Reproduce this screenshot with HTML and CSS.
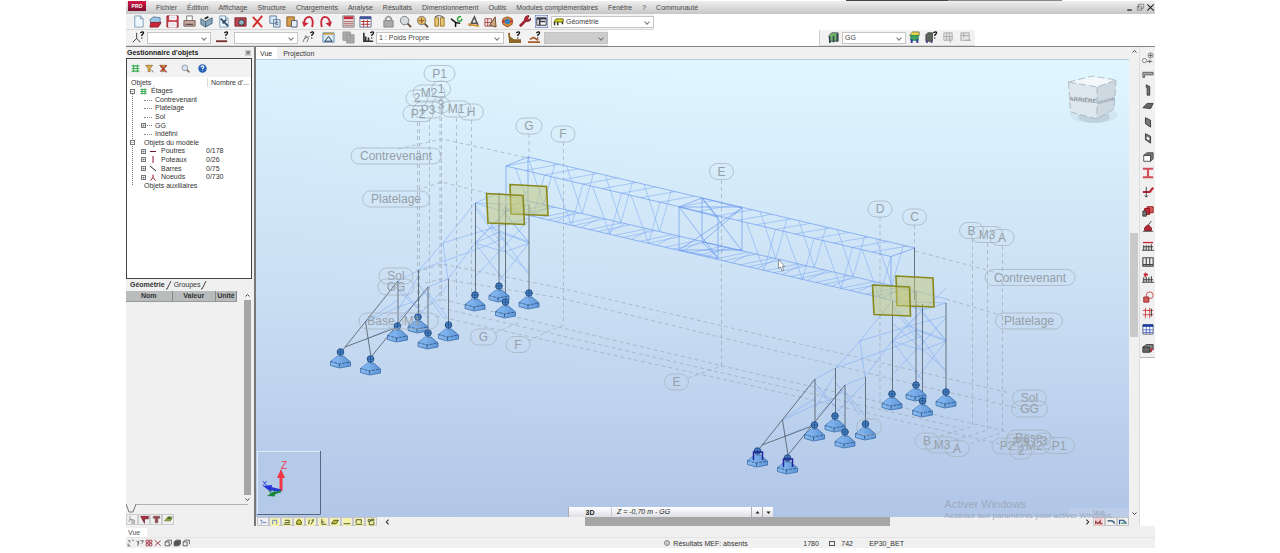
FILE: index.html
```html
<!DOCTYPE html>
<html lang="fr">
<head>
<meta charset="utf-8">
<title>EP30_BET - Vue</title>
<link rel="stylesheet" href="styles.css">
</head>
<body>
<div class="app">
  <header class="menubar">
    <span class="brand">PRO</span>
    <nav class="menus">
      <a href="#">Fichier</a><a href="#">Édition</a><a href="#">Affichage</a><a href="#">Structure</a><a href="#">Chargements</a><a href="#">Analyse</a><a href="#">Résultats</a><a href="#">Dimensionnement</a><a href="#">Outils</a><a href="#">Modules complémentaires</a><a href="#">Fenêtre</a><a href="#">?</a><a href="#">Communauté</a>
    </nav>
    <div class="window-buttons">
      <button data-icon="minimize" aria-label="Réduire"></button>
      <button data-icon="restore" aria-label="Restaurer"></button>
      <button data-icon="close" aria-label="Fermer"></button>
    </div>
  </header>

  <div class="toolbar-row">
    <div class="toolbar toolbar-main">
      <div class="tools" data-tools="new open save print preview capture photo delete copy paste undo redo"></div>
      <div class="tools" data-tools="calc table"></div>
      <div class="tools" data-tools="lock zoom zoomall rotate axes measure edit view3d wrench inspector"></div>
      <label class="combo combo-geometry"><svg class="combo-icon" viewBox="0 0 14 10"><path d="M1 5l3-4h9v4z" fill="#d7d321" stroke="#555718"/><path d="M2 5v4M6 5v4M12 5v3" stroke="#3c4020" stroke-width="2"/></svg><select aria-label="Disposition"><option>Géométrie</option></select></label>
    </div>
  </div>
  <div class="toolbar-row">
    <div class="toolbar toolbar-selection">
      <div class="tools" data-tools="nodeq"></div>
      <label class="combo combo-node"><select aria-label="Noeuds"><option></option></select></label>
      <div class="tools tools-wide" data-tools="barq"></div>
      <label class="combo combo-node"><select aria-label="Barres"><option></option></select></label>
      <div class="tools tools-spaced" data-tools="objq frame blocks loadq"></div>
      <label class="combo combo-case"><select aria-label="Cas de charge"><option>1 : Poids Propre</option></select></label>
      <div class="tools tools-spaced" data-tools="caseq modeq"></div>
      <label class="combo combo-off"><select aria-label="Mode" disabled><option></option></select></label>
    </div>
    <div class="toolbar toolbar-storey">
      <div class="tools" data-tools="storey"></div>
      <label class="combo combo-node"><select aria-label="Étage"><option>GG</option></select></label>
      <div class="tools" data-tools="storeys storeyq gridup griddown"></div>
    </div>
  </div>

  <div class="workspace">
    <aside class="side">
      <section class="objects">
        <h2>Gestionnaire d'objets <button class="dock-close" aria-label="Fermer le panneau">×</button></h2>
        <div class="objects-box">
          <div class="tools object-tools" data-tools="tree filter filteroff search help"></div>
          <div class="tree-head"><span>Objets</span><span>Nombre d'...</span></div>
          <ul class="tree">
            <li class="l1"><i class="box">−</i><svg viewBox="0 0 14 14"><path d="M1 3h12M1 7h12M1 11h12M4 1v12M10 1v12" stroke="#35a854" stroke-width="2"/></svg>Étages</li>
            <li class="l2">Contrevenant</li>
            <li class="l2">Platelage</li>
            <li class="l2">Sol</li>
            <li class="l2 plus"><i class="box">+</i>GG</li>
            <li class="l2">Indéfini</li>
            <li class="l1 plain"><i class="box">−</i>Objets du modèle</li>
            <li class="l3"><i class="box">+</i><svg viewBox="0 0 14 14"><path d="M1 7h12" stroke="#6b1b27" stroke-width="2"/></svg>Poutres<b>0/178</b></li>
            <li class="l3"><i class="box">+</i><svg viewBox="0 0 14 14"><path d="M7 0v14" stroke="#8f1c2e" stroke-width="2"/></svg>Poteaux<b>0/26</b></li>
            <li class="l3"><i class="box">+</i><svg viewBox="0 0 14 14"><path d="M1 2l12 10" stroke="#222" stroke-width="2"/></svg>Barres<b>0/75</b></li>
            <li class="l3"><i class="box">+</i><svg viewBox="0 0 14 14"><path d="M7 1v6l-5 6M7 7l5 6" fill="none" stroke="#8f1c2e" stroke-width="2"/></svg>Noeuds<b>0/730</b></li>
            <li class="l1 plain">Objets auxiliaires</li>
          </ul>
        </div>
        <div class="tabs">
          <button class="on">Géométrie</button><svg viewBox="0 0 6 10"><path d="M0 9h1L5 1" fill="none" stroke="#444"/></svg>
          <button>Groupes</button><svg viewBox="0 0 6 10"><path d="M0 9h1L5 1" fill="none" stroke="#444"/></svg>
        </div>
      </section>
      <section class="properties">
        <div class="prop-body">
          <table><thead><tr><th class="name">Nom</th><th>Valeur</th><th class="unit">Unité</th></tr></thead></table>
          <div class="vbar vbar-dark"><button data-icon="up" aria-label="Monter"></button><span class="thumb"></span><button data-icon="down" aria-label="Descendre"></button></div>
        </div>
        <div class="prop-tab"><svg viewBox="0 0 128 10" preserveAspectRatio="xMinYMin"><path d="M0 0l3 8h4l3-8h112" fill="none" stroke="#555" stroke-width=".8"/></svg></div>
        <div class="tools side-tools" data-tools="pnode pbar psect pload"></div>
      </section>
    </aside>

    <main class="view">
      <div class="view-main">
        <div class="view-tabs"><button class="on">Vue</button><button>Projection</button></div>
        <div class="canvas">
          <svg id="model" viewBox="256 60 873 457" role="img" aria-label="Vue 3D de la structure">
            <defs>
              <linearGradient id="steel" x2="1"><stop offset="0" stop-color="#8bbcf0"/><stop offset="1" stop-color="#5f97da"/></linearGradient>
              <symbol id="support" viewBox="0 0 22 22" overflow="visible">
                <path d="M7.500 10h6l7 6v4l-11 2-9-2.500v-4z" fill="url(#steel)" stroke="#2d609f" stroke-width=".7"/>
                <path d="M.5 15.500l9 2.500V10h-2z" fill="#7db2ef" opacity=".8"/>
                <path d="M.5 15.500l9 2.500 11-2M9.500 18v4" fill="none" stroke="#24456d" stroke-width=".7" stroke-dasharray="3 1"/>
                <circle cx="10.500" cy="6" r="3.300" fill="#4a86cc" stroke="#173f70" stroke-width=".8"/>
                <path d="M10.500 3v6.500M7 6h7" stroke="#173f70" stroke-width=".6"/>
              </symbol>
            </defs>
            <g id="grid" class="grid-lines"></g>
            <g id="truss" class="bars"></g>
            <g id="towers"></g>
            <g class="plates">
              <path d="M510 184.500l36.500 2 1.500 29-37-1.500z"/><path d="M486.500 193.500l36.500 2 1.500 29-36.500-1.500z"/>
              <path d="M896 276l37 2 1 29-37-1.500z"/><path d="M872.500 285l37 2 1 29-36.500-1.500z"/>
            </g>
            <g id="supports"></g>
            <g id="labels" class="labels"></g>
            <g class="cube">
              <ellipse cx="1094" cy="115" rx="24" ry="8" fill="#8899a8" opacity=".12"/>
              <ellipse cx="1094" cy="117" rx="16" ry="6" fill="#788896" opacity=".2"/>
              <path d="M1068.500 82l24-6 23.500 4-19 7z" fill="#f1f7fb"/>
              <path d="M1068.500 82l28.500 5v32l-26.500-7z" fill="#dfe7ee"/>
              <path d="M1097 87l19-7-2 29-17 10z" fill="#cdd8e1"/>
              <path d="M1068.500 82l24-6 23.500 4-19 7zv0l2 30 26.500 7 17-10 2-29M1097 87v32" fill="none" stroke="#9aa7b1" stroke-width=".7" stroke-dasharray="7 3"/>
              <text x="1083" y="102" text-anchor="middle" transform="rotate(5 1083 99)">ARRIÈRE</text>
              <text x="1106" y="102" text-anchor="middle" transform="rotate(-14 1106 99)" class="cube-side">GAUCHE</text>
            </g>
            <g class="axis-box">
              <rect x="257.500" y="451.500" width="63" height="63"/>
              <path d="M257 514.500h63.500V451" class="axis-shade"/>
              <path d="M281 491v-16" stroke="#f23645" stroke-width="3"/><path d="M277 478l4-9 4 9z" fill="#f23645"/>
              <path d="M281 491l-10-2.500" stroke="#2436d8" stroke-width="3"/><path d="M272 485l-9 1 8 6z" fill="#2436d8"/>
              <path d="M281 491l-8 3" stroke="#19863b" stroke-width="2"/><path d="M275 490.500l-8 5.500 8 .5z" fill="#19863b"/>
              <text x="281" y="469" fill="#ef3e4c" font-size="10">Z</text><text x="262" y="486" fill="#2436d8" font-size="8">X</text><text x="268" y="495" fill="#19863b" font-size="7">Y</text>
            </g>
            <path d="M778.500 259.500v9l2-1.500 1.700 4 1.500-.7-1.500-3.800h2.500z" fill="#fff" stroke="#555" stroke-width=".6"/>
          </svg>
          <div class="level-bar"><button>3D</button><span>Z = -0,70 m - GG</span><button data-icon="triup" aria-label="Niveau supérieur"></button><button data-icon="tridown" aria-label="Niveau inférieur"></button></div>
          <div class="ghost-tab">Vue</div>
          <div class="watermark"><strong>Activer Windows</strong><span>Accédez aux paramètres pour activer Windows.</span></div>
        </div>
        <div class="hbar">
          <div class="tools attr-tools" data-tools="a1 a2 a3 a4 a5 a6 a7 a8 a9 a10"></div>
          <button class="step" data-icon="left" aria-label="Gauche"></button>
          <div class="htrack"><span class="hthumb"></span></div>
          <button data-icon="right" aria-label="Droite"></button>
          <div class="tools attr-tools" data-tools="r1 r2 r3"></div>
        </div>
      </div>
      <div class="vbar view-scroll"><button data-icon="up" aria-label="Monter"></button><span class="track"><span class="thumb"></span></span><button data-icon="down" aria-label="Descendre"></button></div>
    </main>
    <div class="rail"><div class="rail-tools" id="rail"></div></div>
  </div>

  <footer class="status">
    <div class="status-view"><button>Vue</button></div>
    <div class="status-row">
      <div class="tools status-tools" data-tools="s1 s2 s3 s4 s5 s6 s7"></div>
      <span class="result"><i class="globe"></i>Résultats MEF: absents</span>
      <span class="count">1780</span><span class="bars-count"><i class="grid-mark"></i>742</span><span class="file">EP30_BET</span>
    </div>
  </footer>
</div>
<script src="script.js"></script>
</body>
</html>
```
FILE: styles.css
```css
* { box-sizing: border-box; }
body { margin: 0; background: #fff; font-family: "Liberation Sans", Arial, sans-serif; font-size: 7px; line-height: 9px; color: #333; }
button { margin: 0; padding: 0; border: 0; background: none; font: inherit; color: inherit; display: flex; align-items: center; justify-content: center; }
svg { display: block; }
.app { margin: 0 125px 0 126px; }
.app::before { content: ""; display: block; width: 21%; height: 1px; margin-left: 70%; background: linear-gradient(90deg, #444 47%, #888 47%); }

.menubar { display: flex; align-items: center; height: 13px; background: linear-gradient(#efefef, #c6c6c6); }
.brand { align-self: flex-start; width: 18px; height: 10px; margin-left: 2px; background: linear-gradient(#d31846, #7d0e2d); color: #fff; font-size: 5px; font-weight: 700; text-align: center; line-height: 11px; }
.menus { display: flex; flex: 1; gap: 10px; padding-left: 10px; }
.menus a { color: #4a4a4a; text-decoration: none; white-space: nowrap; }
.window-buttons { display: flex; gap: 1px; }
.window-buttons svg { width: 9px; height: 9px; }

.toolbar-row { display: flex; justify-content: space-between; height: 16px; }
.toolbar { display: flex; align-items: center; background: #f2f2f2; border-bottom: 1px solid #d8d8d8; }
.tools { display: flex; align-items: center; }
.tools button { width: 17px; height: 14px; }
.tools svg { width: 13px; height: 13px; }
.toolbar-main { padding-left: 4px; gap: 6px; }
.toolbar-selection { padding-left: 4px; }
.toolbar-selection .tools-wide button { width: 23px; }
.toolbar-selection .tools-spaced button { width: 20px; }
.toolbar-storey { margin-right: 180px; padding: 0 1px 0 5px; border-left: 1px solid #ccc; }
.combo { position: relative; display: flex; align-items: center; height: 12px; background: #fff; border: 1px solid #c4c4c4; }
.combo::after { content: ""; position: absolute; right: 4px; top: 3px; width: 3px; height: 3px; border: solid #777; border-width: 0 1px 1px 0; transform: rotate(45deg); }
.combo select { appearance: none; width: 100%; height: 10px; padding: 0 2px; border: 0; background: transparent; font: inherit; line-height: 10px; color: #444; }
.combo-icon { width: 11px; height: 8px; margin-left: 1px; flex: none; }
.combo-geometry { width: 103px; margin-left: -5px; }
.combo-node { width: 64px; }
.combo-case { width: 128px; margin-left: -2px; }
.combo-off { width: 64px; background: #cdcdcd; }

.workspace { display: flex; border-top: 1px solid #858585; background: #f0f0f0; }
.side { display: flex; flex-direction: column; flex: none; width: 128px; }
.objects h2 { display: flex; justify-content: space-between; margin: 0; padding: 1px 3px 0 1px; font-size: 7px; line-height: 10px; color: #222; }
.dock-close { width: 6px; height: 6px; align-self: center; background: #ccc; color: #555; }
.objects-box { width: 126px; height: 221px; border: 1px solid #444; background: #fff; }
.object-tools { height: 18px; padding-left: 1px; background: #f2f2f2; }
.object-tools button { width: 14px; }
.object-tools button:nth-child(4) { margin-left: 8px; }
.object-tools button:nth-child(5) { margin-left: 3px; }
.object-tools svg { width: 9px; height: 9px; }
.tree-head { display: grid; grid-template-columns: 76px 1fr; padding: 1px 0 0 4px; }
.tree-head span + span { padding-left: 3px; border-left: 1px solid #ddd; }
.tree { position: relative; display: grid; grid-auto-rows: 1fr; height: 103px; margin: 0; padding: 0; list-style: none; }
.tree::before { content: ""; position: absolute; left: 5px; top: 6px; bottom: 5px; border-left: 1px dotted #777; }
.tree li { position: relative; display: flex; align-items: center; line-height: 8px; white-space: nowrap; }
.tree svg { width: 7px; height: 7px; margin-right: 4px; }
.tree b { position: absolute; left: 79px; font-weight: 400; }
.box { display: block; flex: none; width: 5px; height: 5px; border: 1px solid #777; background: #fff; font-style: normal; font-size: 5px; line-height: 3px; text-align: center; z-index: 1; }
.l1 { padding-left: 3px; }
.l1 .box { margin-right: 4px; }
.l1 .box + svg { margin-left: 1px; }
.l1.plain { padding-left: 17px; }
.l1.plain .box { margin: 0 9px 0 -14px; }
.l2 { padding-left: 28px; }
.l2::before { content: ""; position: absolute; left: 17px; top: 4px; width: 8px; border-top: 1px dotted #888; }
.l2 .box { margin: 0 9px 0 -14px; }
.l3 { padding-left: 14px; }
.l3 .box { margin-right: 3px; }
.l3 svg { width: 8px; height: 7px; margin-right: 4px; }
.tabs { display: flex; align-items: center; height: 11px; padding-left: 4px; }
.tabs svg { width: 6px; height: 10px; margin: 0 2px 0 1px; }
.tabs .on { font-weight: 700; }
.properties { display: flex; flex: 1; flex-direction: column; }
.prop-body { display: flex; flex: 1; justify-content: space-between; width: 126px; padding-top: 1px; }
table { align-self: flex-start; width: 111px; border-collapse: collapse; table-layout: fixed; }
th { padding: 0; height: 10px; background: #b9bcbc; border-right: 1px solid #8a8a8a; border-bottom: 1px solid #999; font-weight: 700; color: #333; }
.name { width: 46px; }
.unit { width: 21px; }
.vbar { display: flex; flex-direction: column; align-items: center; width: 9px; background: #f0f0f0; }
.vbar svg { width: 7px; height: 9px; }
.vbar-dark .thumb { flex: 1; width: 7px; background: #a6a6a6; }
.prop-tab { height: 10px; }
.prop-tab svg { width: 128px; height: 10px; }
.side-tools { padding: 0 0 1px; }
.side-tools button { width: 12px; height: 11px; border: 1px solid #ccc; }
.side-tools svg { width: 9px; height: 9px; }

.view { display: flex; flex: 1; min-width: 0; border-left: 2px solid #777; }
.view-main { flex: 1; min-width: 0; }
.view-tabs { display: flex; height: 12px; }
.view-tabs button { padding: 0 5px 0 6px; }
.view-tabs .on { padding: 0 5px 0 4px; background: #fff; }
.canvas { position: relative; background: linear-gradient(100deg, rgba(190,205,238,.1), transparent 45%), linear-gradient(#e0f7ff, #cbe0f4 50%, #b1c6e7); border-top: 1px solid #b9cde0; }
.canvas > svg { width: 100%; height: auto; }
.grid-lines { fill: none; stroke: #98a3ae; stroke-width: .6; stroke-dasharray: 4 3; }
.bars { fill: none; stroke: #85aff5; stroke-width: .6; }
.chords { stroke: #6f9cee; stroke-width: .7; }
.dark-bars { fill: none; stroke: #4e5963; stroke-width: .8; }
.plates { fill: #c4c875; fill-opacity: .5; stroke: #87891c; stroke-width: 1.6; }
.labels rect { fill: none; stroke: #a4b0ba; stroke-width: .7; }
.labels text { fill: #969fa8; font-size: 12px; text-anchor: middle; }
.cube text { font-size: 6px; font-weight: 700; fill: #87939d; }
.cube .cube-side { font-size: 4px; }
.axis-box rect { fill: #b5cae9; stroke: #e0e9f6; }
.axis-shade { fill: none; stroke: #58677f; }
.level-bar { position: absolute; left: 312px; bottom: 0; display: flex; width: 205px; height: 10px; background: linear-gradient(#fff, #dedfe6); color: #222; }
.level-bar button:first-child { width: 44px; border-right: 1px solid #ccc; font-weight: 700; }
.level-bar span { flex: 1; padding-left: 5px; line-height: 10px; font-style: italic; }
.level-bar button { width: 11px; border-left: 1px solid #aaa; }
.level-bar svg { width: 7px; height: 7px; }
.watermark { position: absolute; right: 15px; bottom: -5px; display: flex; flex-direction: column; color: #9ca9bd; font-size: 8px; line-height: 12px; white-space: nowrap; z-index: 1; }
.watermark strong { font-size: 11px; font-weight: 400; }
.ghost-tab { position: absolute; right: 0; bottom: 0; width: 60px; height: 9px; background: #bccde9; color: #93a2b8; text-align: center; }
.hbar { display: flex; align-items: center; height: 9px; }
.attr-tools { margin-left: 1px; }
.attr-tools button { width: 12px; height: 9px; border: 1px solid #c5c5c5; }
.attr-tools svg { width: 10px; height: 8px; }
.hbar > button svg { width: 9px; height: 8px; }
.hbar .step { margin-left: 6px; }
.htrack { display: flex; flex: 1; align-self: stretch; }
.hthumb { width: 44%; margin-left: 28%; background: #a6a6a6; }
.view-scroll { width: 10px; padding-bottom: 8px; }
.track { flex: 1; display: flex; flex-direction: column; }
.track::before { content: ""; flex: none; height: 39%; }
.view-scroll .thumb { flex: none; width: 8px; height: 23%; background: #c9c9c9; }
.rail { width: 16px; background: #fff; border-left: 1px solid #ddd; }
.rail-tools { display: flex; flex-direction: column; align-items: center; padding: 3px 0 1px; background: #f0f0f0; border-bottom: 1px solid #bbb; }
.rail-tools button { width: 14px; height: 16px; }
.rail-tools svg { width: 12px; height: 12px; }
.rail-tools .gap { margin-top: 3px; }

.status { background: #f0f0f0; padding-top: 2px; }
.status-view button { width: 21px; height: 9px; background: #fff; justify-content: flex-start; padding-left: 2px; color: #555; }
.status-row { display: flex; align-items: center; height: 11px; border-top: 1px solid #e4e4e4; }
.status-tools { width: 65px; }
.status-tools button { width: 10px; height: 10px; }
.status-tools svg { width: 8px; height: 8px; }
.result { display: flex; align-items: center; margin-left: 46%; gap: 3px; width: 139px; }
.count { width: 26px; }
.bars-count { display: flex; gap: 6px; width: 40px; align-items: center; }
.globe { width: 6px; height: 6px; border: 1px solid #888; border-radius: 50%; background: #ccc; }
.grid-mark { width: 6px; height: 5px; border: 1px dashed #555; }
```
FILE: script.js
```javascript
const p = (d, stroke = '#444', fill = 'none', w = 1) => `<path d="${d}" stroke="${stroke}" fill="${fill}" stroke-width="${w}"/>`;
const q = p('M9 2q3-2 3.500 0q0 1-2 2.500v1M10.500 7v1', '#111', 'none', 1.4);
const red = '#c9283a';
const lens = c => p('M9 9l4 4', '#64513a', 'none', 2) + `<circle cx="6" cy="6" r="4.500" fill="${c}" stroke="#777"/>`;
const sheet = p('M3 1h6l3 3v9H3zM9 1v3h3', '#7c9db8', '#edf7ff');
const icons = {
  minimize: p('M2 11h7', '#222', 'none', 2), restore: p('M4 2h8v6H4zM2 5h7v6H2z', '#555', '#eee'), close: p('M2 2l10 10M12 2L2 12', '#222', 'none', 1.6),
  up: p('M3 9l4-4 4 4', '#333', 'none', 1.8), down: p('M3 5l4 4 4-4', '#333', 'none', 1.8),
  left: p('M9 3L5 7l4 4', '#222', 'none', 1.8), right: p('M5 3l4 4-4 4', '#222', 'none', 1.8),
  triup: p('M3 9l4-5 4 5z', 'none', '#222'), tridown: p('M3 5l4 5 4-5z', 'none', '#222'),
  new: sheet,
  open: p('M1 5l4-3 7 1v7l-9 3z', '#5e7e9b', '#9bc6e4') + p('M2 8h11l-3 5H1z', '#942333', red),
  save: p('M1 1h12v12H1z', '#94202e', '#c94450') + p('M4 1h7v4H4zM3 8h8v5H3z', '#fff', '#e8e8ee'),
  print: p('M4 6V1h6v5', '#777', '#fff') + p('M1 6h12v6H1z', '#775b55', '#c8a9a0') + p('M3 10h8', '#333'),
  preview: p('M1 4l5 3v6L1 10zM6 7l7-4v6l-7 4', '#446078', '#88a8bb') + p('M5 4l4-2', '#222', 'none', 2),
  capture: sheet + p('M4 4l4 4 4 4M6 9l4-4', '#344e66', 'none', 2),
  photo: p('M1 3h12v9H1z', '#852631', '#b84450') + '<circle cx="8" cy="8" r="3" fill="#90b4cc" stroke="#333"/>',
  delete: p('M2 2l10 11M12 1L2 13', '#d42b2b', 'none', 2),
  copy: p('M2 1h7v8H2zM6 5h7v8H6z', '#617d98', '#d6e7f5') + p('M8 8h3M8 10h3', '#557'),
  paste: p('M2 2h8v10H2z', '#805c2c', '#d69f4a') + p('M7 6h6v7H7z', '#557', '#e5eefa'),
  undo: p('M2 9Q3 2 8 2q5 1 3 11', red, 'none', 2) + p('M0 7l2 6 5-4z', 'none', red),
  redo: p('M12 9Q11 2 6 2 1 3 3 13', red, 'none', 2) + p('M14 7l-2 6-5-4z', 'none', red),
  calc: p('M1 1h12v12H1z', '#777', '#e8e4e4') + p('M2 3h10', red, 'none', 3) + p('M2 7h10M2 9h10M2 11h10', '#a66', 'none', 1),
  table: p('M1 2h12v11H1z', '#668', '#fff') + p('M1 3h12', '#4256a0', 'none', 3) + p('M2 7h10M5 5v8M9 5v8M2 10h10', '#a33'),
  lock: p('M4 7V4q3-5 6 0v3', '#999', 'none', 2) + p('M2 6h10v7H2z', '#888', '#aaa'),
  zoom: lens('#d5dde0'), zoomall: lens('#e4b960') + p('M3 6h6M6 3v6', '#8a5b2b'),
  rotate: p('M2 3h4v9H2zM8 3h4v9H8z', '#9c782a', '#e5c774') + p('M2 2q5-3 10 1', '#444'),
  axes: p('M6 8L1 4M6 8v5M6 8l5 1', '#111', 'none', 1.600) + p('M8 6q0-5 4-4M13 4q-1 4-5 2', '#2ca13c', 'none', 1.600),
  measure: p('M3 12L8 2l4 10M4 9h8', '#555', 'none', 1.6) + p('M1 10l12 2', '#d4953a', 'none', 2),
  edit: p('M1 4h7v8H1zM4 4v8M1 8h8', '#a44') + p('M6 11l6-9 1 11z', '#6a4a30', '#caa57c'),
  view3d: p('M2 4l5-2 5 2v6l-5 3-5-3z', '#8d5a23', '#df8830') + '<circle cx="7" cy="7" r="3" fill="#3683bb"/>' + p('M1 7h3M10 7h3', red, 'none', 2),
  wrench: p('M2 12l7-7', '#9f2535', 'none', 3) + p('M8 2q3-2 4-1l-2 3 2 1 2-2q0 4-4 4L7 5z', '#701925', red),
  inspector: p('M0 0h14v14H0z', '#4a5fa8', '#dae3f6') + p('M2 3h10v8H2z', '#333', '#fff') + p('M2 4h10M5 4v7M6 7h5', '#334', 'none', 1.8),
  nodeq: p('M5 2v6l-4 4M5 8l4 4', '#333') + q, barq: q + p('M0 11h12', '#733', 'none', 2), objq: p('M1 12L4 5l3 3-2 4M3 8l5-2', '#777') + q,
  frame: p('M1 2h12v10H1z', '#5c88b5', '#d8e9f7') + p('M1 3h12', '#c99d48', 'none', 2) + p('M3 11l4-5 4 5z', '#234'),
  blocks: p('M1 1h8v9H1zM5 4h8v9H5z', '#999', '#aaa'),
  loadq: p('M2 2v9h10M4 6v5M7 7v4', '#333', 'none', 1.8) + q, caseq: p('M1 2l1 8h11v2H1M2 7l6 4', '#8a6725', 'none', 2) + q, modeq: p('M0 12h13M2 9l4-2 5 3', '#a65d2c', 'none', 1.800) + q,
  storey: p('M2 5l3-3h7v9H3z', '#556', '#71bb67') + p('M3 6v7M7 5v7M11 3v8', '#345', 'none', 1.8),
  storeys: p('M2 4l3-3h7v4H2z', '#775', '#ecd545') + p('M3 5h8v5H3z', '#286', '#42a65a') + p('M4 9v4M10 9v4', '#339', 'none', 2),
  storeyq: p('M1 4l2-2h5v9H1z', '#444', '#5d655d') + p('M2 10v3M7 10v3', '#548', 'none', 2) + q,
  gridup: p('M2 2h9v8H2zM5 2v8M8 2v8M2 6h9M9 8v5', '#aaa', '#e6e6e6'), griddown: p('M2 2h9v8H2zM5 2v5M2 5h9M7 10h6', '#aaa', '#e6e6e6'),
  tree: p('M1 3h12M1 7h12M1 11h12M4 1v12M10 1v12', '#3caf57', 'none', 1.800),
  filter: p('M1 2h11L8 7v5H5V7z', '#805c2c', '#e0ab42') + p('M10 9l3 4', '#333'), filteroff: p('M1 2h11L8 7v5H5V7z', '#805c2c', '#d39b3c') + p('M2 2l10 11M12 2L2 12', '#a33', 'none', 1.800),
  search: lens('#d8e4f5'), help: '<circle cx="7" cy="7" r="6.500" fill="#2460b3"/>' + p('M5 5q0-2 2-2t2 2q0 1-2 2v1M7 10v1', '#fff', 'none', 1.800),
  pnode: p('M3 1v6l-2 4M3 7h5M6 8h4v5H6z', '#777', '#ddd'), pbar: p('M1 2h12v4H7v7z', '#641520', '#a92e3e'), psect: p('M2 2h10v3H9v7H5V5H2z', '#655', '#a7404c'), pload: p('M1 9l5-6h7l-3 6z', '#355a20', '#ddc72d') + p('M5 7l3-4 3 4', '#222', '#3c8d40')
};
const yellow = p('M0 0h14v14H0z', 'none', '#f5f1a8');
const attr = ['M2 4h3q2 4-2 7M7 8h6', 'M3 11V4h7v7', 'M1 11h12M3 8h8M3 4h8v4', 'M3 11V6q4-6 8 0v5z', 'M4 3l-1 8M8 4l4-1-5 8', 'M5 2v9h8M5 7h4', 'M1 10l4-6h8l-4 6z', 'M1 10h12', 'M2 9V3h9v6M1 11h12', 'M2 3h4v3H2zM8 2h4v3H8zM4 7v5h8V7'];
attr.forEach((d, i) => icons['a' + (i + 1)] = (i ? yellow : '') + p(d, i < 2 ? '#6480bd' : '#43512b', [3, 6].includes(i) ? '#cbc331' : 'none', 1.600));
icons.r1 = p('M0 0h14v14H0z', 'none', '#f3c8cf') + p('M1 11V6l4 4 4-5v5h4', '#833', 'none', 1.800);
icons.r2 = p('M1 5h7q4 0 5 5', '#246', 'none', 2); icons.r3 = p('M1 11V4h7l5 6', '#248', 'none', 2) + p('M4 9h8', '#2a8a54', 'none', 2);
['M2 3h3v3M2 8v4h4M9 2h3', 'M1 3l4 5M5 3L3 12M8 3h5l-3 5', 'M2 2h4v4H2zM8 2h4v4H8zM2 8h4v4H2zM8 8h4v4H8z', 'M1 2l11 10M2 12l4-5 6-4', 'M2 5h7v7H2zM2 5l4-3h7v7l-4 3', 'M2 5h7v7H2zM2 5l4-3h7v7l-4 3', 'M2 5h7v7H2zM2 5l4-3h7v7'].forEach((d, i) => icons['s' + (i + 1)] = p(d, i === 2 || i === 3 ? '#a13443' : '#555', i === 5 ? '#555' : 'none', 1.500));

const rail = [
  ['Structure', '<circle cx="3" cy="10" r="2.500" fill="none" stroke="#777"/><circle cx="10" cy="4" r="3" fill="none" stroke="#777"/>' + p('M10 2v4M8 4h4M6 11h6M9 9v4', '#555')],
  ['Barre', p('M1 5h12v3H3v3H1z', '#555', '#aaa')], ['Poteau', p('M5 1l4 2v10H6V4H5z', '#333', '#777')],
  ['Dalle', p('M1 9l5-5h7l-3 6z', '#333', '#666')], ['Voile', p('M4 2l6 3v8l-6-4z', '#333', '#777')],
  ['Ouverture', p('M4 2l6 3v8l-6-4z', '#333', '#777') + p('M6 6l2 1v2L6 8z', '#fff', '#fff')],
  ['Volume', p('M2 5h8v7H2z', '#444', '#fff') + p('M2 5l4-3h7v7l-3 3V5z', '#444', '#777'), 1],
  ['Section', p('M1 2h12M1 12h12M7 2v10', '#cf4d54', 'none', 2.500)],
  ['Relâchement', p('M1 7h8l4-5', '#b9232f', 'none', 2.500) + p('M5 1v12M3 11l2 2 2-2', '#333'), 1],
  ['Panneau', p('M6 2h7v7H6z', '#811', '#e05a5a') + p('M3 4h6v7H3z', '#811', red) + p('M1 7h4v6H1z', '#333', '#777'), 1],
  ['Appui', p('M3 11V8l3-3h2l3 3v3z', '#811', '#b32839') + p('M7 5l4-5M1 12h12', '#333')],
  ['Charges', p('M2 6v6M5 6v6M8 6v6M11 5v7M0 12h14M1 8h12', '#444', 'none', 1.200) + p('M1 3h12', red, 'none', 1.600), 1],
  ['Cas', p('M1 2h12v10H1zM5 2v10M9 2v10M1 10h12', '#444', '#eee', 1.300)],
  ['Combinaisons', p('M2 6v6M5 6v6M8 6v6M11 5v7M0 12h14M1 9h12', '#444', 'none', 1.200) + p('M4 1v5M2 3h5', red, 'none', 2)],
  ['Liaison', '<circle cx="9" cy="5" r="4" fill="none" stroke="#c44"/>' + p('M2 7h6v6H2z', '#922', '#d05a5a'), 1],
  ['Axes', p('M1 4h12M1 9h12M4 1v12M9 1v12', '#c33') + p('M11 2v9', '#333')],
  ['Tableaux', p('M1 2h12v11H1z', '#557', '#fff') + p('M1 3h12', '#1d3ca0', 'none', 3) + p('M1 8h12M1 11h12M5 4v9M9 4v9', '#4564b5')],
  ['Rendu', p('M1 6h8v6H1z', '#333', '#666') + p('M1 6l4-3h8v5l-4 4V6z', '#333', '#888') + p('M11 7v5M9 9h5', red), 1]
];

const draw = shapes => `<svg viewBox="0 0 14 14">${shapes}</svg>`;
document.querySelectorAll('[data-tools]').forEach(group => {
  group.innerHTML = group.dataset.tools.split(' ').map(n => `<button aria-label="${n}">${draw(icons[n])}</button>`).join('');
});
document.querySelectorAll('[data-icon]').forEach(b => { b.innerHTML = draw(icons[b.dataset.icon]); });
document.getElementById('rail').innerHTML = rail.map(([n, s, gap]) => `<button aria-label="${n}" class="${gap ? 'gap' : ''}">${draw(s)}</button>`).join('');

const put = (id, html) => { document.getElementById(id).innerHTML = html; };
const L = (a, b) => `M${a[0].toFixed(1)} ${a[1].toFixed(1)}L${b[0].toFixed(1)} ${b[1].toFixed(1)}`;

put('grid', `<path d="M417.500 122V318M419.500 122V318M429.500 118V300M440 96V302M441.500 96V300M456.500 118V300M471.500 120V300M529 134V160M563.500 142V323M721.500 180V370M880 217V405M914.500 225V250M972.500 239V426M987.500 243V430M1002.500 246V432
M398 149L442 139 528 158M915 251L987 270 1003 275M417 190L442 182 490 194M946 299L1003 316M417 272L442 264 560 288 1010 393M425 283L442 279 560 298 900 381 1030 411M418 312L440 299 613 340 740 370 1005 431M441 308L740 377 960 428M436 316L740 383 1012 447M495 333L520 322M528 341L565 324M688 378L722 366M940 436L975 426M955 440L988 430M970 444L1003 432"/>`);

const chord = (a, b) => t => [a[0] + (b[0] - a[0]) * t, a[1] + (b[1] - a[1]) * t];
const topBack = chord([528, 157], [915, 248]), topFront = chord([506, 166], [891, 256.5]);
const lowBack = chord([528, 201], [915, 291]), lowFront = chord([506, 210], [891, 300]);
let web = '';
for (let i = 0; i < 10; i++) {
  const t = i / 10, m = t + .035, n = t + .1;
  if (i !== 4 && i !== 5) {
    web += L(topFront(t + .025), lowFront(m + .035)) + L(lowFront(m + .035), topFront(n));
    web += L(topBack(t), lowBack(t + .04)) + L(lowBack(t + .04), topBack(t + .07));
  }
  web += L(topFront(t), topBack(t + .03)) + L(topFront(t + .05), topBack(t + .08));
}
for (let i = 0; i < 46; i++) {
  const t = i / 46;
  web += L(lowFront(t), lowBack(Math.min(1, t + (i % 3 ? .025 : -.01))));
}
put('truss', `<path d="${web}"/><path class="chords" d="${[topBack, topFront, lowBack, lowFront].map(f => L(f(0), f(1))).join('')}M506 210V166L528 157V201M891 300V256.500L915 248M679 207V250L718 258V217zM702 198V242L742 251V208zM679 207L702 198M679 207H742M679 207L718 258M702 198L742 251M679 250L742 208M702 242L742 208M679 250H742M702 198L718 217M702 242L718 258"/>`);

const tower = `<path class="bars" d="M475 203L443 243 419 270 398 281M475 203L529 205M475 203L499 193 529 201M475 203L505 212 529 205M443 243L492 228 529 218M443 243L448 279 428 287M419 270L475 250 505 238M448 279L475 243M475 243L529 190M475 205L507 245M475 243L499 232 529 243M475 243L505 252 529 243M475 225L529 272M529 220L475 277M505 212L475 243 505 282M499 205L529 243 500 280M499 232L529 275M475 208L499 240M505 215L529 242M398 290L428 318M419 275L398 310M428 290L398 320M428 293L448 318M419 285L443 317M448 285L419 315M398 285L418 308M366 322L398 307 419 300M366 339L398 325M365 322L398 300M492 228L529 242"/>
<path class="dark-bars" d="M475.500 203V296M499 193V286M505.500 206V302M529 205V293M398 281L342 351M398 281V326M418.500 270V317M428 287V333M448.500 279V325M428 287L371 357M365.500 322L371 357M398 327L345 347"/>`;
put('towers', `${tower}<g transform="translate(417 98)">${tower}</g><path class="dark-bars" d="M914.500 248V300"/>`);

const feet = [[499, 291], [475, 300], [529, 298], [505.5, 307], [418, 322], [397.5, 331], [448.5, 330], [428, 338], [340.5, 357], [370.5, 364]];
const foot = (x, y) => `<use href="#support" x="${x - 10.5}" y="${y - 11}" width="22" height="22"/>`;
put('supports', feet.map(([x, y]) => foot(x, y) + foot(x + 417, y + 99)).join('') + '<path d="M753.500 460v-8h9v8M783.500 467v-8h9v8" fill="none" stroke="#22229a" stroke-width="1.500"/>');

const marks = [['P1', 439.5, 73.5, 31], ['1', 441, 89, 19], ['M2', 429, 93, 32], ['2', 417, 98, 22], ['3', 441, 105, 18], ['P3', 428, 110, 30], ['P2', 418, 113.5, 30], ['M1', 456, 109, 30], ['H', 471, 112, 25], ['G', 529, 126, 26], ['F', 563, 134, 24], ['Contrevenant', 396, 156, 90], ['Platelage', 396, 199, 67], ['Sol', 396, 276, 34], ['GG', 396, 287, 36], ['Base', 381, 321, 44], ['M1', 412, 321, 52], ['E', 721.5, 171.5, 24], ['D', 880, 209, 24], ['C', 914.5, 217, 24], ['B', 971.5, 230.5, 24], ['M3', 987, 234.5, 32], ['A', 1002, 237.5, 24], ['Contrevenant', 1030, 277.5, 90], ['Platelage', 1029, 321, 67], ['Sol', 1029.5, 398, 34], ['GG', 1029.5, 409, 36], ['G', 483.5, 337, 26], ['F', 518, 344.5, 24], ['E', 676.5, 382, 24], ['', 869, 427, 25], ['B', 927, 441, 24], ['M3', 942, 445, 32], ['A', 957, 448.5, 24], ['P2', 1007, 446, 30], ['P3', 1020, 442, 30], ['Base', 1029, 438, 44], ['M2', 1034, 446, 32], ['2', 1021, 451, 22], ['3', 1044, 441, 20], ['P1', 1059, 445.5, 31]];
put('labels', marks.map(([s, x, y, w]) => `<rect x="${x - w / 2}" y="${y - 8}" width="${w}" height="16" rx="8"/><text x="${x}" y="${y + 4}">${s}</text>`).join(''));
```
